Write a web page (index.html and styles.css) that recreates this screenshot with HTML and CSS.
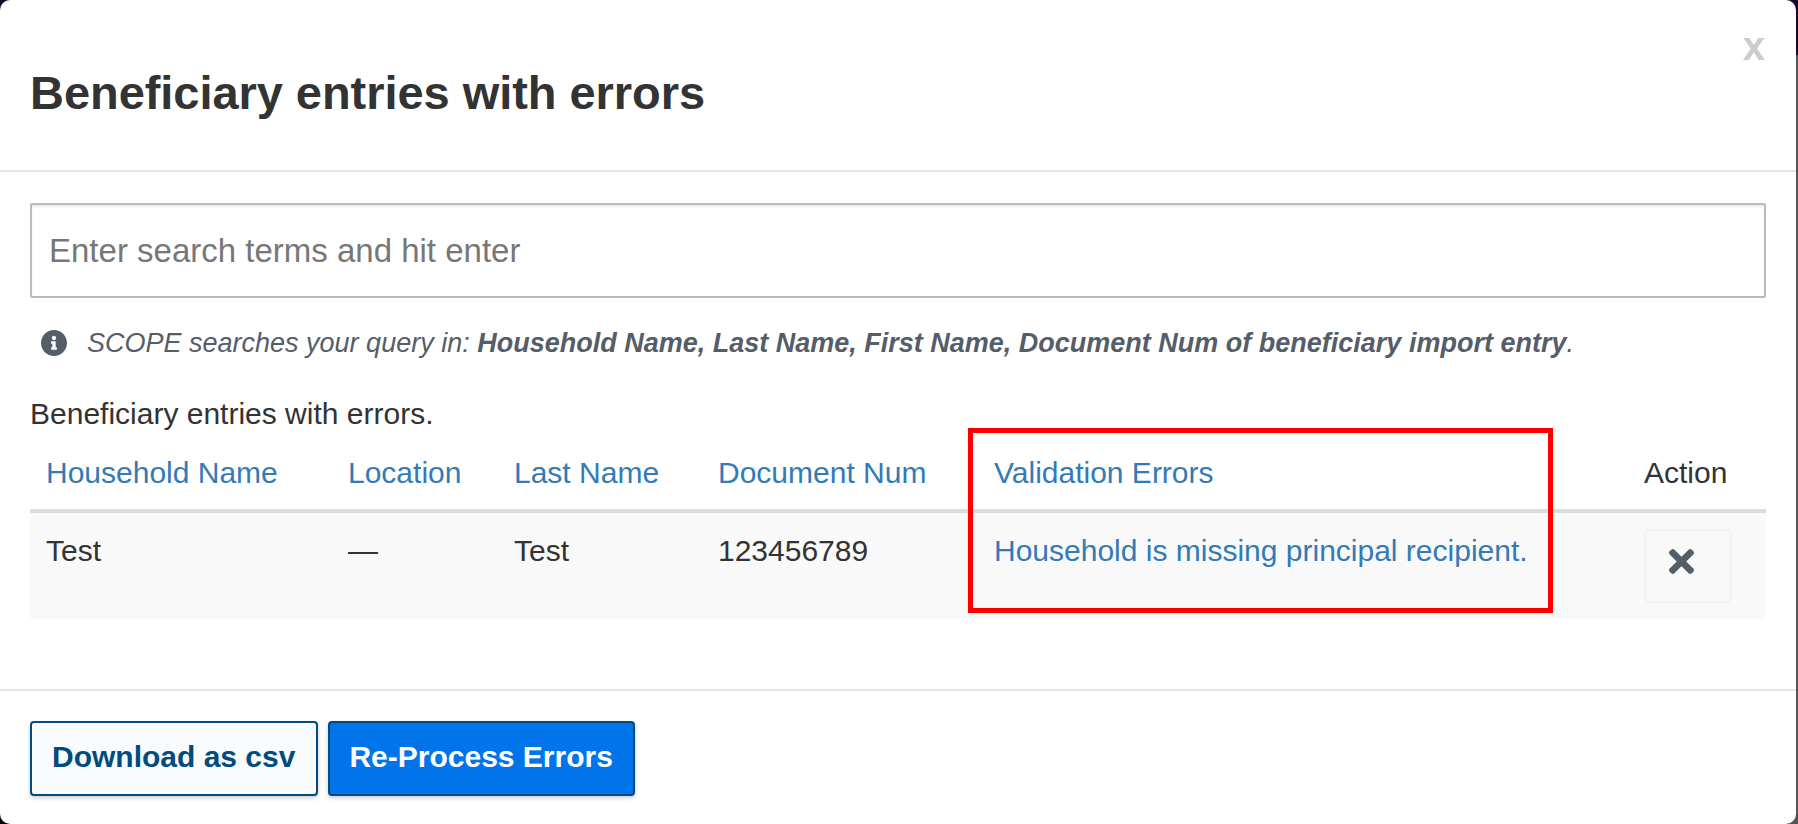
FILE: index.html
```html
<!DOCTYPE html>
<html lang="en">
<head>
<meta charset="utf-8">
<title>Beneficiary entries with errors</title>
<link rel="stylesheet" href="styles.css">
</head>
<body>
<div class="modal">
  <header class="modal-header">
    <h1 class="modal-title">Beneficiary entries with errors</h1>
    <button class="close" type="button">x</button>
  </header>
  <main class="modal-body">
    <input class="search" type="text" placeholder="Enter search terms and hit enter">
    <p class="hint">
      <svg class="info-icon" viewBox="8 8 496 496" aria-hidden="true"><path d="M256 8C119.043 8 8 119.083 8 256c0 136.997 111.043 248 248 248s248-111.003 248-248C504 119.083 392.957 8 256 8zm0 110c23.196 0 42 18.804 42 42s-18.804 42-42 42-42-18.804-42-42 18.804-42 42-42zm56 254c0 6.627-5.373 12-12 12h-88c-6.627 0-12-5.373-12-12v-24c0-6.627 5.373-12 12-12h12v-64h-12c-6.627 0-12-5.373-12-12v-24c0-6.627 5.373-12 12-12h64c6.627 0 12 5.373 12 12v100h12c6.627 0 12 5.373 12 12v24z"/></svg>
      <em>SCOPE searches your query in: <strong>Household Name, Last Name, First Name, Document Num of beneficiary import entry</strong>.</em>
    </p>
    <table class="entries">
      <caption>Beneficiary entries with errors.</caption>
      <colgroup>
        <col class="c-household"><col class="c-location"><col class="c-last"><col class="c-doc"><col class="c-errors"><col class="c-action">
      </colgroup>
      <thead>
        <tr>
          <th><a href="#">Household Name</a></th>
          <th><a href="#">Location</a></th>
          <th><a href="#">Last Name</a></th>
          <th><a href="#">Document Num</a></th>
          <th><a href="#">Validation Errors</a></th>
          <th>Action</th>
        </tr>
      </thead>
      <tbody>
        <tr>
          <td>Test</td>
          <td>—</td>
          <td>Test</td>
          <td>123456789</td>
          <td><a href="#">Household is missing principal recipient.</a></td>
          <td>
            <button class="remove" type="button" aria-label="Remove">
              <svg class="times-icon" viewBox="0 80 352 352" aria-hidden="true"><path d="M242.72 256l100.07-100.07c12.28-12.28 12.28-32.19 0-44.48l-22.24-22.24c-12.28-12.28-32.19-12.28-44.48 0L176 189.28 75.93 89.21c-12.28-12.28-32.19-12.28-44.48 0L9.21 111.45c-12.28 12.28-12.28 32.19 0 44.48L109.28 256 9.21 356.07c-12.28 12.28-12.28 32.19 0 44.48l22.24 22.24c12.28 12.28 32.2 12.28 44.48 0L176 322.72l100.07 100.07c12.28 12.28 32.2 12.28 44.48 0l22.24-22.24c12.28-12.28 12.28-32.19 0-44.48L242.72 256z"/></svg>
            </button>
          </td>
        </tr>
      </tbody>
    </table>
  </main>
  <footer class="modal-footer">
    <button class="btn btn-light" type="button">Download as csv</button>
    <button class="btn btn-primary" type="button">Re-Process Errors</button>
  </footer>
  <div class="annotation"></div>
</div>
</body>
</html>
```

FILE: styles.css
```css
* { box-sizing: border-box; }
html, body { height: 100%; }
body {
  margin: 0;
  overflow: hidden;
  font-family: "Liberation Sans", Arial, sans-serif;
  color: #333;
  background:
    linear-gradient(#1c0733 55px, #555 55px) right top / 10px 100% no-repeat,
    linear-gradient(#1c0733 50%, #000 50%);
}
.modal {
  position: relative;
  width: 1796px;
  height: 824px;
  background: #fff;
  border-radius: 10px;
  display: flex;
  flex-direction: column;
}
.modal-header {
  height: 172px;
  flex: none;
  padding: 0 30px;
  display: flex;
  align-items: center;
  border-bottom: 2px solid #e5e5e5;
}
.modal-title {
  margin: 16px 0 0;
  font-size: 47px;
  line-height: 1.1;
  font-weight: 700;
  letter-spacing: -0.05px;
}
.close {
  position: absolute;
  top: 22px;
  right: 31px;
  padding: 0;
  border: 0;
  background: none;
  color: #ccc;
  font: 700 40px/1.2 "Liberation Sans", Arial, sans-serif;
}
.modal-body {
  flex: 1;
  padding: 31px 30px 0;
}
.search {
  display: block;
  width: 100%;
  height: 95px;
  padding: 0 17px;
  border: 2px solid #bbb;
  border-radius: 2px;
  box-shadow: inset 0 2px 2px rgba(0,0,0,.08);
  font: 33px "Liberation Sans", Arial, sans-serif;
  color: #333;
  background: #fff;
}
.search::placeholder { color: #777; opacity: 1; }
.hint {
  margin: 30px 0 0 11px;
  display: flex;
  align-items: center;
  gap: 20px;
  font-size: 27px;
  line-height: 30px;
  color: #555e68;
}
.info-icon { width: 26px; height: 26px; fill: #555e68; flex: none; }
.entries {
  width: 100%;
  margin-top: 36px;
  table-layout: fixed;
  border-collapse: collapse;
  font-size: 30px;
  line-height: 40px;
}
.entries caption {
  text-align: left;
  padding: 0;
  height: 44px;
  line-height: 40px;
}
.c-household { width: 302px; }
.c-location { width: 166px; }
.c-last { width: 204px; }
.c-doc { width: 276px; }
.c-errors { width: 650px; }
.entries th {
  text-align: left;
  font-weight: 400;
  padding: 0 16px 16px;
  height: 73px;
  vertical-align: bottom;
  border-bottom: 4px solid #ddd;
  white-space: nowrap;
}
.entries td {
  padding: 16px;
  height: 106px;
  line-height: 44px;
  vertical-align: top;
  background: #f9f9f9;
  white-space: nowrap;
}
.entries a { color: #337ab7; text-decoration: none; }
.remove {
  display: flex;
  align-items: center;
  justify-content: center;
  width: 88px;
  height: 74px;
  padding: 0 14px 9px 0;
  border: 2px solid #eff2f6;
  border-radius: 6px;
  background: #f9f9f9;
}
.times-icon { width: 25px; height: 25px; fill: #555e68; }
.modal-footer {
  flex: none;
  height: 135px;
  padding: 30px 30px 0;
  border-top: 2px solid #e5e5e5;
  display: flex;
  align-items: flex-start;
  gap: 10px;
}
.btn {
  height: 75px;
  padding: 0 20px 4px;
  border: 2px solid #004b80;
  border-radius: 4px;
  font: 700 30px "Liberation Sans", Arial, sans-serif;
  box-shadow: 0 2px 4px rgba(0,0,0,.2);
}
.btn-light { color: #004b80; background: #f9fbfc; padding-right: 21px; }
.btn-primary { color: #fff; background: #0074e8; padding-left: 19px; }
.annotation {
  position: absolute;
  left: 968px;
  top: 428px;
  width: 585px;
  height: 185px;
  border: 5px solid #f00;
  pointer-events: none;
}
```
